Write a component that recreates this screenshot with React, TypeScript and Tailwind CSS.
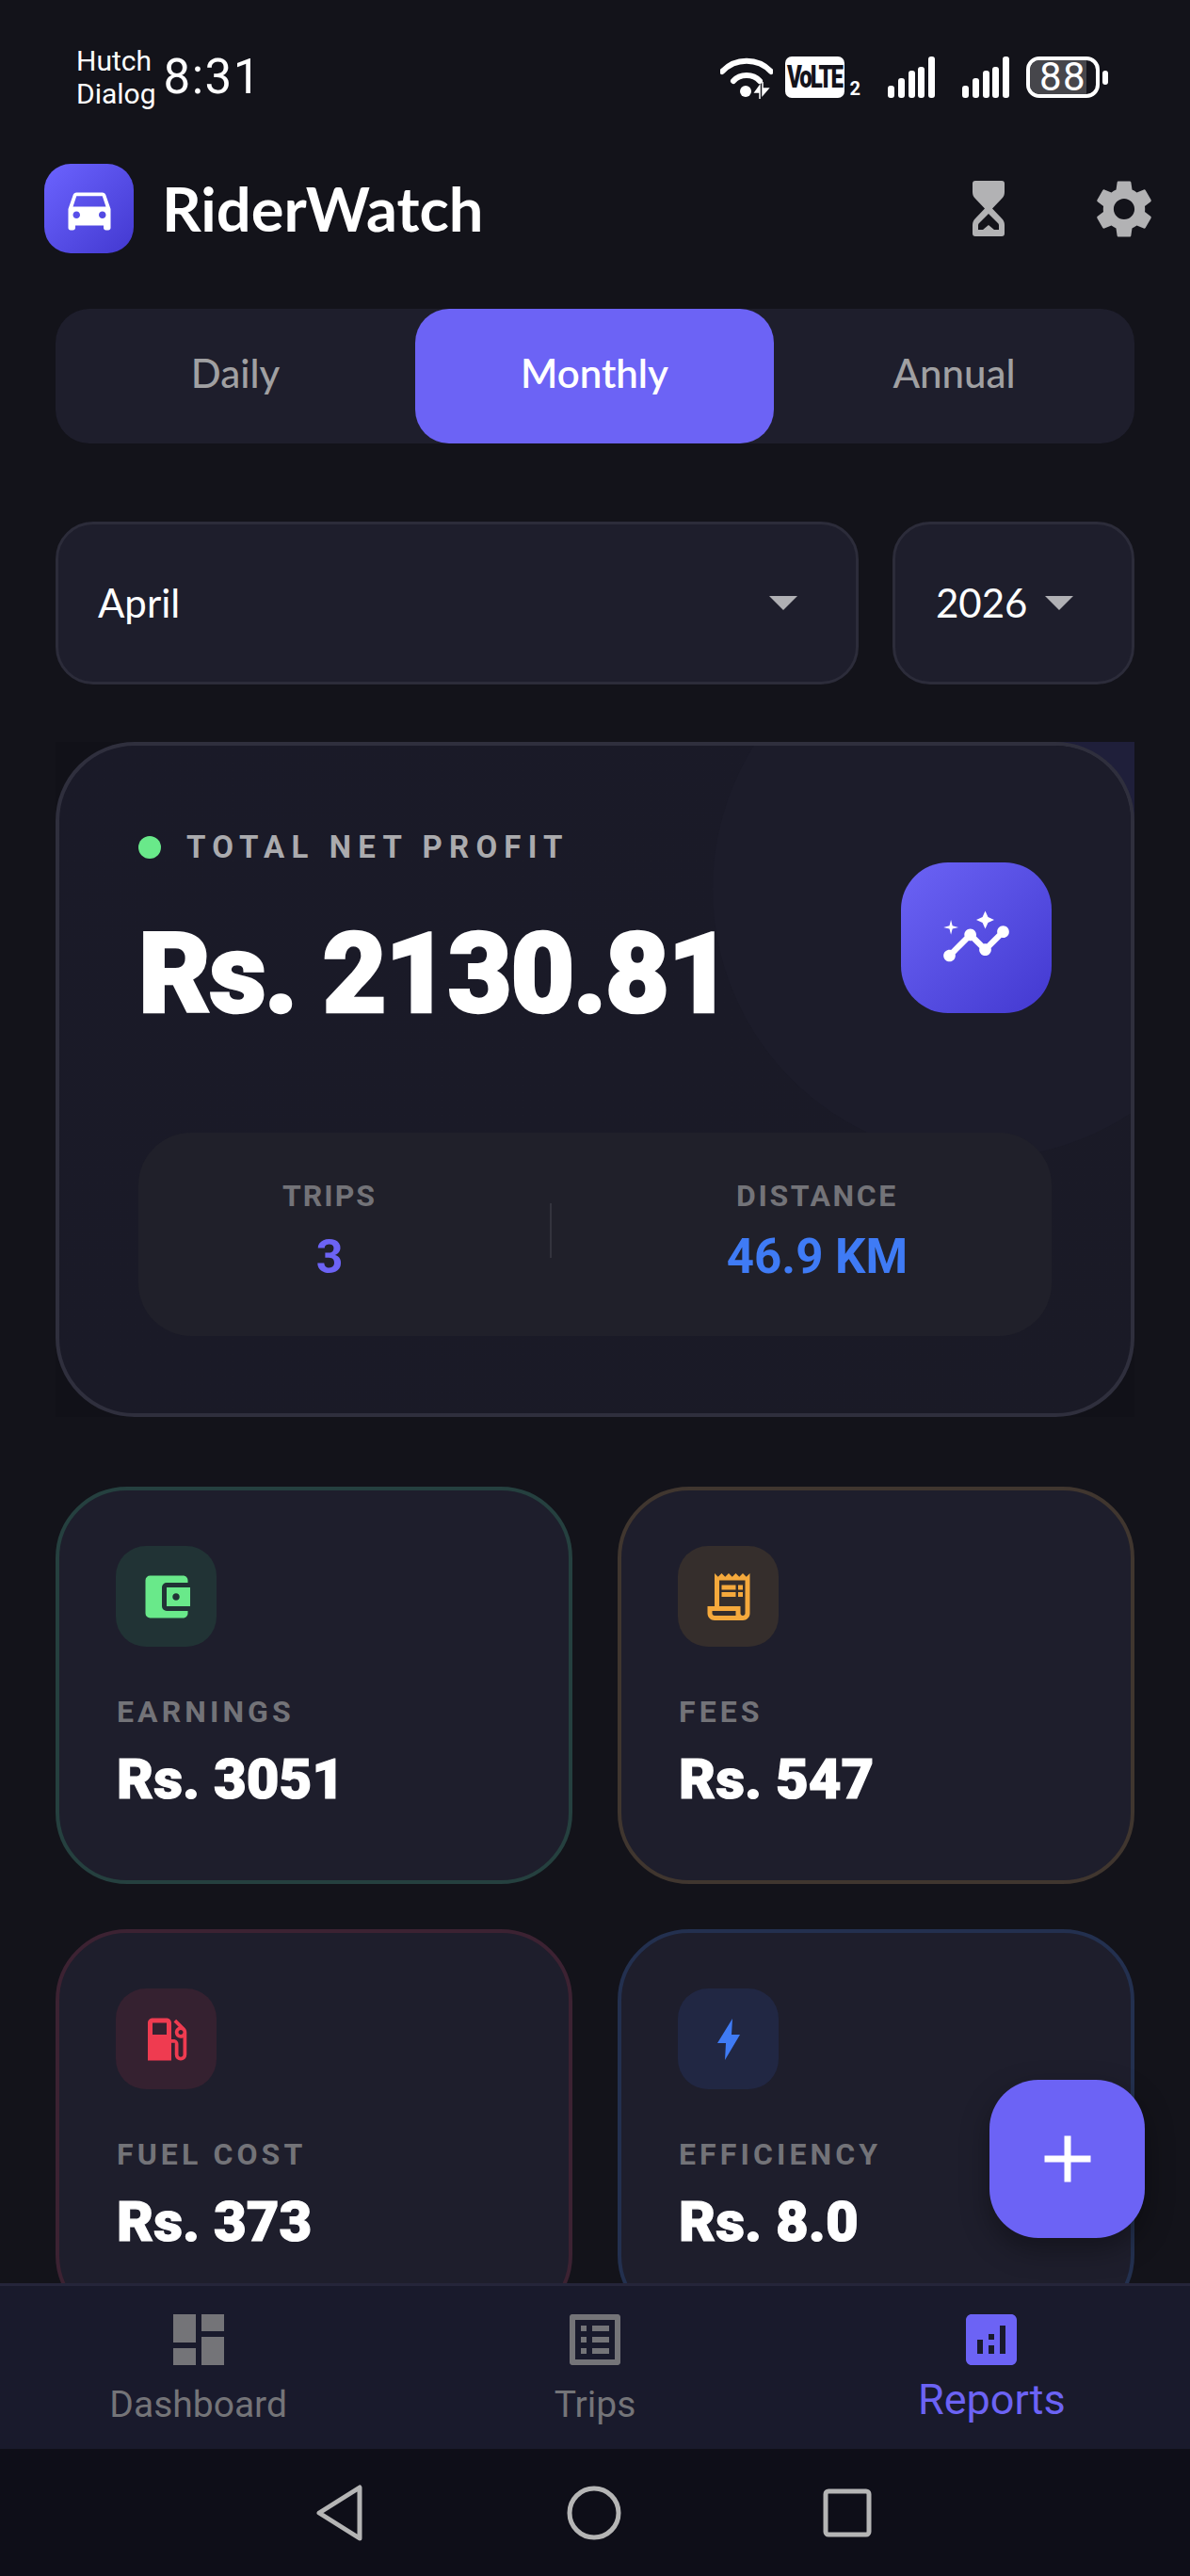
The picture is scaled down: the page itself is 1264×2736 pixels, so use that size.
import React from 'react';
import {
  MdDirectionsCar,
  MdSettings,
  MdInsights,
  MdAccountBalanceWallet,
  MdOutlineReceiptLong,
  MdLocalGasStation,
  MdDashboard,
  MdListAlt,
  MdAnalytics,
  MdAdd,
} from 'react-icons/md';

const Wifi = () => (
  <svg width="56" height="46" viewBox="0 0 56 46" className="text-white">
    <path d="M2 17C16 2 40 2 54 17" fill="none" stroke="currentColor" strokeWidth="6" strokeLinecap="round" />
    <path d="M14 27C21 19 35 19 42 27" fill="none" stroke="currentColor" strokeWidth="6" strokeLinecap="round" />
    <circle cx="27" cy="38" r="6" fill="currentColor" />
    <path d="M42 46V32l-5 7h5M45 28v14l6-7h-6" fill="currentColor" stroke="currentColor" strokeWidth="1.5" />
  </svg>
);

const Signal = () => (
  <svg width="50" height="44" viewBox="0 0 50 44" fill="white">
    <rect x="0" y="31" width="7" height="13" rx="3" />
    <rect x="11" y="23" width="7" height="21" rx="3" />
    <rect x="22" y="15" width="7" height="29" rx="3" />
    <rect x="32" y="11" width="7" height="33" rx="3" />
    <rect x="43" y="0" width="7" height="44" rx="3" />
  </svg>
);

const Hourglass = () => (
  <svg width="38" height="59" viewBox="0 0 38 59" fill="#b2b2b4" fillRule="evenodd">
    <path d="M5 0h28a3 3 0 0 1 3 3v9c0 3-1 5-3 7L23 29.5 33 40c2 2 3 4 3 7v9a3 3 0 0 1-3 3H5a3 3 0 0 1-3-3v-9c0-3 1-5 3-7l10-10.500L5 19c-2-2-3-4-3-7V3a3 3 0 0 1 3-3zM19 35L9 45c-1 1-1 2-1 3v4h5l6-5 6 5h5v-4c0-1 0-2-1-3z" />
  </svg>
);

const Bolt = () => (
  <svg width="24" height="44" viewBox="0 0 24 44" fill="#3f7bf5">
    <path d="M16 0L0 26h9L8 44 24 17h-9z" />
  </svg>
);

const Caret = () => (
  <svg width="30" height="15" viewBox="0 0 30 15" fill="#b0b0b4">
    <path d="M0 0h30L15 15z" />
  </svg>
);

const StatCard = ({ label, value, border, tint, icon }: { label: string; value: string; border: string; tint: string; icon: React.ReactNode }) => (
  <div className={`h-[422px] rounded-[76px] border-[4px] bg-[#1e1e2c] pl-[61px] pt-[59px] ${border}`}>
    <div className={`-ml-[1px] w-[107px] h-[107px] rounded-[32px] flex items-center justify-center ${tint}`}>{icon}</div>
    <div className="mt-[49px] text-[32px] leading-[40px] font-bold tracking-[4.1px] text-[#737378] font-['Roboto',sans-serif]">{label}</div>
    <div className="mt-[16px] text-[60px] leading-[72px] font-black text-white font-['Roboto',sans-serif] [-webkit-text-stroke:1.2px_white]">{value}</div>
  </div>
);

const NavItem = ({ label, icon, active }: { label: string; icon: React.ReactNode; active?: boolean }) => (
  <div className="flex-1 flex flex-col items-center pt-[21px]">
    {icon}
    <div className={active ? 'text-[45px] leading-[52px] mt-[2px] text-[#6c63f5] font-["Roboto",sans-serif]' : 'text-[39px] leading-[48px] mt-[9px] text-[#747478] font-["Roboto",sans-serif]'}>
      {label}
    </div>
  </div>
);

export default function App() {
  return (
    <div className='relative w-[1264px] h-[2736px] overflow-hidden bg-[#13131a] flex flex-col font-["Lato",sans-serif]'>
      {/* status bar */}
      <div className="h-[160px] shrink-0 flex items-center justify-between pl-[81px] pr-[87px] pb-[78px] pt-[82px] text-white">
        <div className="flex items-center gap-[8px] font-['Roboto',sans-serif]">
          <div className="text-[30px] leading-[35px]">
            Hutch
            <br />
            Dialog
          </div>
          <div className="text-[51px] leading-[60px] tracking-[1.500px]">8:31</div>
        </div>
        <div className="flex items-center">
          <Wifi />
          <div className="ml-[13px] w-[63px] h-[44px] rounded-[7px] bg-white flex items-center justify-center text-[#13131a] font-['Roboto',sans-serif]">
            <span className="text-[24px] font-black tracking-[-2px] scale-y-[1.35]">VoLTE</span>
          </div>
          <div className="ml-[6px] self-end text-[20px] leading-[22px] font-bold font-['Roboto',sans-serif]">2</div>
          <div className="ml-[29px]"><Signal /></div>
          <div className="ml-[29px]"><Signal /></div>
          <div className="ml-[18px] relative w-[78px] h-[44px] rounded-[14px] border-[4px] border-white flex items-center justify-center">
            <div className="absolute left-0 top-0 bottom-0 w-[60px] rounded-l-[10px] bg-[#46464b]" />
            <span className="relative text-[42px] leading-[36px] tracking-[1.500px] font-['Roboto',sans-serif]">88</span>
          </div>
          <div className="ml-[3px] w-[6px] h-[15px] rounded-full bg-white" />
        </div>
      </div>

      {/* header */}
      <div className="shrink-0 h-[95px] mt-[14px] pl-[47px] pr-[33px] flex items-center">
        <div className="w-[95px] h-[95px] rounded-[28px] bg-linear-to-br from-[#6c63ff] to-[#4338d0] flex items-center justify-center">
          <MdDirectionsCar size={60} color="white" />
        </div>
        <div className="ml-[30px] text-[65px] font-bold text-white">RiderWatch</div>
        <div className="ml-auto flex items-center">
          <Hourglass />
          <div className="ml-[88px]"><MdSettings size={74} color="#b2b2b4" /></div>
        </div>
      </div>

      <div className="flex-1 min-h-0 overflow-hidden pl-[59px] pr-[59px]">
        {/* period tabs */}
        <div className="mt-[59px] h-[143px] rounded-[36px] bg-[#1e1e2c] flex items-stretch text-[42px]">
          <div className="w-[382px] pb-[6px] flex items-center justify-center text-[#a0a0a2] font-medium">Daily</div>
          <div className="w-[381px] pb-[6px] rounded-[36px] bg-[#6c63f5] flex items-center justify-center text-white font-semibold">Monthly</div>
          <div className="flex-1 pb-[6px] flex items-center justify-center text-[#a0a0a2] font-medium">Annual</div>
        </div>

        {/* month and year */}
        <div className="mt-[83px] flex gap-[36px]">
          <div className="flex-1 h-[173px] rounded-[40px] border-[3px] border-[#2c2c3a] bg-[#1e1e2c] pl-[42px] pr-[62px] flex items-center justify-between text-[42px] text-white">
            April
            <Caret />
          </div>
          <div className="w-[257px] h-[173px] rounded-[40px] border-[3px] border-[#2c2c3a] bg-[#1e1e2c] pl-[43px] pr-[62px] flex items-center justify-between text-[42px] text-white">
            2026
            <Caret />
          </div>
        </div>

        {/* net profit card */}
        <div className="relative mt-[61px] h-[717px] bg-[#111118]">
          <div className="absolute right-0 top-0 w-[100px] h-[100px] bg-[#1f1f3a]" />
          <div className="relative h-full rounded-[84px] border-[4px] border-[#2f2f3d] bg-linear-to-br from-[#1a1a28] to-[#1a1a26] overflow-hidden pl-[84px] pr-[84px] pt-[88px]">
            <div className="absolute left-[694px] top-[-134px] w-[572px] h-[572px] rounded-full bg-[#1c1c2a]" />
            <div className="relative flex items-center">
              <div className="w-[24px] h-[24px] rounded-full bg-[#69e98a]" />
              <div className="ml-[27px] text-[33px] leading-[40px] font-bold tracking-[7.2px] text-[#ababae] font-['Roboto',sans-serif]">TOTAL NET PROFIT</div>
            </div>
            <div className="relative flex">
              <div className="mt-[45px] text-[118px] leading-[140px] font-black tracking-[-1.8px] text-white font-['Roboto',sans-serif] [-webkit-text-stroke:2.5px_white]">Rs. 2130.81</div>
              <div className="ml-auto -mt-[4px] w-[160px] h-[160px] shrink-0 rounded-[50px] bg-linear-to-br from-[#6c63f5] to-[#4338d0] flex items-center justify-center">
                <MdInsights size={76} color="white" />
              </div>
            </div>
            <div className="relative mt-[98px] h-[216px] pb-[8px] rounded-[56px] bg-[#20202a] flex items-center font-['Roboto',sans-serif]">
              <div className="w-[406px] text-center">
                <div className="text-[32px] leading-[40px] font-bold tracking-[2px] text-[#737378]">TRIPS</div>
                <div className="mt-[15px] text-[50px] leading-[60px] font-bold text-[#6c63f5]">3</div>
              </div>
              <div className="ml-[31px] w-[2px] h-[58px] bg-[#33333d]" />
              <div className="ml-[182px] w-[200px] text-center">
                <div className="text-[32px] leading-[40px] font-bold tracking-[2.6px] text-[#737378]">DISTANCE</div>
                <div className="mt-[15px] text-[51px] leading-[60px] font-bold text-[#3f7bf5]">46.9 KM</div>
              </div>
            </div>
          </div>
        </div>

        {/* stat cards */}
        <div className="mt-[74px] grid grid-cols-2 gap-x-[48px] gap-y-[48px]">
          <StatCard label="EARNINGS" value="Rs. 3051" border="border-[#25403f]" tint="bg-[#213335]" icon={<MdAccountBalanceWallet size={60} color="#69e98a" />} />
          <StatCard label="FEES" value="Rs. 547" border="border-[#40362f]" tint="bg-[#352e2c]" icon={<MdOutlineReceiptLong size={60} color="#f5a93c" />} />
          <StatCard label="FUEL COST" value="Rs. 373" border="border-[#3c2232]" tint="bg-[#352130]" icon={<MdLocalGasStation size={60} color="#ef3b50" />} />
          <StatCard label="EFFICIENCY" value="Rs. 8.0" border="border-[#23304f]" tint="bg-[#212743]" icon={<Bolt />} />
        </div>
      </div>

      {/* add button */}
      <div className="absolute left-[1051px] top-[2209px] w-[165px] h-[168px] rounded-[52px] bg-[#6c63f5] shadow-[0_12px_30px_rgba(0,0,0,0.35)] flex items-center justify-center">
        <MdAdd size={84} color="white" />
      </div>

      {/* bottom tabs */}
      <div className="shrink-0 h-[176px] border-t-[3px] border-[#25253a] bg-[#191a2c] flex">
        <NavItem label="Dashboard" icon={<MdDashboard size={72} color="#747478" />} />
        <NavItem label="Trips" icon={<MdListAlt size={72} color="#747478" />} />
        <NavItem label="Reports" active icon={<MdAnalytics size={72} color="#6c63f5" />} />
      </div>

      {/* android nav */}
      <div className="shrink-0 h-[135px] bg-[#0e0e18] flex items-center justify-center">
        <svg width="592" height="60" viewBox="0 0 592 60" fill="none" stroke="#b5b5b5" strokeWidth="5" strokeLinejoin="round">
          <path d="M46 3v54L3 30z" />
          <circle cx="295" cy="30" r="26" />
          <rect x="541" y="7" width="46" height="46" rx="3" />
        </svg>
      </div>
    </div>
  );
}
